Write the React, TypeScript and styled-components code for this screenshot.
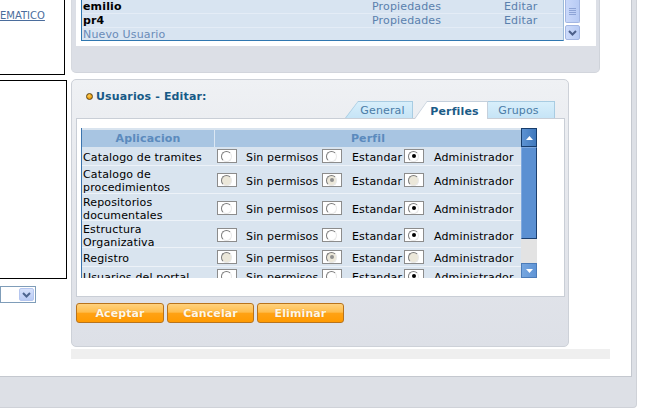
import React from 'react';
import styled, { createGlobalStyle } from 'styled-components';

const Global = createGlobalStyle`
  html, body { margin: 0; padding: 0; background: #fff; }
  body { font-family: "DejaVu Sans", Verdana, sans-serif; font-size: 11px; color: #000; letter-spacing: 0.15px; }
  * { box-sizing: border-box; }
`;

const Page = styled.div`
  width: 653px;
  height: 418px;
  overflow: hidden;
  background: #fff;
`;

const Frame = styled.div`
  width: 637px;
  height: 408px;
  background: #dde0e6;
  padding: 0 4px 30px 0;
  border-right: 1px solid #cfd2d8;
  border-bottom: 1px solid #cfd2d8;
  border-bottom-right-radius: 4px;
`;

const Inner = styled.div`
  display: flex;
  width: 100%;
  height: 100%;
  background: #fff;
  border-right: 1px solid #c4c8cf;
  border-bottom: 1px solid #c4c8cf;
`;

const LeftCol = styled.div`
  width: 71px;
  display: flex;
  flex-direction: column;
`;

const TopBox = styled.div`
  width: 65px;
  height: 75px;
  border-right: 1px solid #000;
  border-bottom: 1px solid #000;
  padding-top: 9px;
  line-height: 13px;
`;

const Link = styled.a`
  color: #4b6d9c;
  text-decoration: underline;
  font-size: 10px;
  letter-spacing: 0;
`;

const SideBox = styled.div`
  margin-top: 5px;
  width: 67px;
  height: 199px;
  border: 1px solid #000;
  border-left: none;
`;

const Select = styled.div`
  margin-top: 7px;
  width: 36px;
  height: 17px;
  border: 1px solid #7f9db9;
  display: flex;
  justify-content: flex-end;
  align-items: stretch;
  padding: 1px;
`;

const SelectBtn = styled.div`
  width: 15px;
  background: linear-gradient(#d6e1fb, #b9cbf5);
  border: 1px solid #b5c6ef;
  border-radius: 2px;
  display: flex;
  align-items: center;
  justify-content: center;
`;

const Main = styled.div`
  display: flex;
  flex-direction: column;
`;

const TopPanel = styled.div`
  width: 529px;
  height: 73px;
  background: #dcdfe6;
  border-right: 1px solid #cfd3da;
  border-bottom: 1px solid #d2d5dc;
  border-left: 1px solid #d6d9df;
  border-bottom-left-radius: 5px;
  border-bottom-right-radius: 5px;
  padding: 0 3px 0 4px;
`;

const ListHolder = styled.div`
  height: 46px;
  background: #fff;
  padding-left: 5px;
  display: flex;
  align-items: flex-start;
`;

const List = styled.div`
  width: 483px;
  height: 41px;
  background: #d8e4f1;
  border-left: 1px solid #2f77b0;
  border-bottom: 1px solid #2f77b0;
  border-right: 1px solid #9dbbd9;
  overflow: hidden;
`;

const ListRow = styled.div`
  display: grid;
  grid-template-columns: 289px 132px 1fr;
  height: 14px;
  line-height: 13px;
  padding-left: 1px;
  border-bottom: 1px solid #e4ecf6;
`;

const UserName = styled.span`
  font-weight: bold;
  color: #000;
`;

const NewUser = styled.span`
  color: #6a8bb8;
`;

const ActionLink = styled.span`
  color: #5a80ad;
`;

const ListScroll = styled.div`
  margin-left: 1px;
  width: 15px;
  height: 40px;
  display: flex;
  flex-direction: column;
  gap: 2px;
`;

const ListThumb = styled.div`
  height: 23px;
  background: linear-gradient(90deg, #c9d8fa, #b8cbf4);
  border: 1px solid #a3b6e2;
  border-top: none;
  border-radius: 0 0 2px 2px;
  display: flex;
  align-items: center;
  justify-content: center;
`;

const ListBtn = styled.div`
  height: 15px;
  background: linear-gradient(90deg, #cddbfb, #b8cbf4);
  border: 1px solid #a3b6e2;
  border-radius: 2px;
  display: flex;
  align-items: center;
  justify-content: center;
`;

const EditPanel = styled.div`
  margin-top: 6px;
  width: 498px;
  height: 268px;
  border: 1px solid #cdd1d8;
  border-radius: 5px;
  background: linear-gradient(#eff1f4, #e6e8ed 40%, #dde0e7);
  padding: 10px 0 0 4px;
`;

const Title = styled.div`
  height: 13px;
  line-height: 13px;
  padding-left: 10px;
  display: flex;
  align-items: center;
  gap: 3px;
  color: #175a87;
  font-weight: bold;
  font-size: 11px;
`;

const Bullet = styled.span`
  width: 7px;
  height: 7px;
  border-radius: 50%;
  background: radial-gradient(circle at 40% 35%, #ffcf55, #e8980c 70%);
  border: 1px solid #5e430e;
`;

const TabRow = styled.div`
  position: relative;
  z-index: 2;
  margin-top: -2px;
  margin-bottom: -1px;
  width: 489px;
  height: 18px;
  display: flex;
  justify-content: flex-end;
  align-items: flex-end;
  padding-right: 10px;
`;

const Tab = styled.div<{ $active?: boolean; $w: number; $z: number; $ml?: number }>`
  position: relative;
  width: ${p => p.$w}px;
  height: ${p => (p.$active ? 18 : 17)}px;
  margin-left: ${p => p.$ml ?? 0}px;
  margin-bottom: ${p => (p.$active ? 0 : 1)}px;
  z-index: ${p => p.$z};
  clip-path: polygon(0 100%, 13px 0, 100% 0, 100% 100%);
  background: ${p => (p.$active ? '#c5d0dc' : '#a8cce2')};
  padding: ${p => (p.$active ? 3 : 2)}px 6px 0 13px;
  display: flex;
  align-items: center;
  justify-content: center;
  color: ${p => (p.$active ? '#1b5b87' : '#4a7ca7')};
  font-weight: ${p => (p.$active ? 'bold' : 'normal')};
  &::before {
    content: '';
    position: absolute;
    top: 1px;
    left: 1px;
    right: 1px;
    bottom: 0;
    clip-path: polygon(0 100%, 12px 0, 100% 0, 100% 100%);
    background: ${p => (p.$active ? '#fff' : 'linear-gradient(#d8effb, #c6e4f6)')};
  }
  & > span {
    position: relative;
  }
`;

const ContentBox = styled.div`
  position: relative;
  z-index: 1;
  width: 489px;
  height: 179px;
  background: #fff;
  border: 1px solid #c9ced6;
  padding: 9px 0 0 4px;
`;

const ScrollArea = styled.div`
  display: flex;
  height: 150px;
`;

const TableWrap = styled.div`
  width: 440px;
  height: 150px;
  overflow: hidden;
  padding-top: 2px;
  border-left: 1px solid #3c74ad;
  background: #d9e4ef;
`;

const HeadRow = styled.div`
  display: grid;
  grid-template-columns: 132px 1fr;
  height: 17px;
  background: #a8c5e2;
  color: #5b8abd;
  font-weight: bold;
  line-height: 17px;
  text-align: center;
`;

const HeadCell = styled.div<{ $divider?: boolean }>`
  border-left: ${p => (p.$divider ? '1px solid #dbe7f3' : 'none')};
`;

const Row = styled.div<{ $h: number }>`
  display: grid;
  grid-template-columns: 132px 1fr;
  height: ${p => p.$h}px;
  background: #d9e4ef;
  border-bottom: 1px solid #edf2f8;
  align-items: start;
`;

const AppName = styled.div<{ $pt: number }>`
  padding: ${p => p.$pt}px 0 0 1px;
  line-height: 12.7px;
`;

const PerfilCell = styled.div`
  align-self: center;
  display: grid;
  grid-template-columns: 20px 85px 20px 62px 20px auto;
  align-items: center;
  padding-left: 3px;
  white-space: nowrap;
`;

const Label = styled.span<{ $pl: number }>`
  padding-left: ${p => p.$pl}px;
  padding-top: 3px;
`;

const RadioBox = styled.span`
  width: 20px;
  height: 14px;
  background: #fff;
  border: 1px solid #8c8c8c;
  display: flex;
  align-items: center;
  padding-left: 3px;
`;

const Circle = styled.span<{ $disabled?: boolean }>`
  width: 11px;
  height: 11px;
  border-radius: 50%;
  border: 1px solid;
  border-color: #7c7c7c #e8e8e8 #e8e8e8 #7c7c7c;
  background: ${p => (p.$disabled ? '#ebe7d9' : '#fff')};
  display: flex;
  align-items: center;
  justify-content: center;
`;

const Dot = styled.span<{ $disabled?: boolean }>`
  width: 4px;
  height: 4px;
  border-radius: 50%;
  background: ${p => (p.$disabled ? '#8f8f8f' : '#000')};
`;

const VScroll = styled.div`
  width: 16px;
  height: 150px;
  display: flex;
  flex-direction: column;
`;

const ScrollBtn = styled.div<{ $h: number; $light?: boolean }>`
  height: ${p => p.$h}px;
  background: ${p => (p.$light ? 'linear-gradient(90deg,#76a6df,#5f94d6)' : 'linear-gradient(90deg,#5c92d2,#4079bd)')};
  border: 1px solid ${p => (p.$light ? '#4b7bb8' : '#173d6c')};
  display: flex;
  align-items: center;
  justify-content: center;
`;

const ScrollThumb = styled.div`
  height: 92px;
  background: #5b90d2;
  border: 1px solid #1c3f6e;
  border-top-color: #7fa9df;
  border-left-color: #7fa9df;
`;

const ScrollTrack = styled.div`
  flex: 1;
  background: #e3e3e3;
`;

const ButtonRow = styled.div`
  margin-top: 6px;
  display: flex;
  gap: 3px;
`;

const OrangeButton = styled.button<{ $w: number }>`
  width: ${p => p.$w}px;
  height: 20px;
  border: 1px solid #b8731c;
  border-radius: 3px;
  background: linear-gradient(#ffd27e 0%, #ffbd4d 45%, #ffa214 52%, #ff9a00 100%);
  color: #fff7e6;
  font-family: "DejaVu Sans", Verdana, sans-serif;
  font-weight: bold;
  font-size: 11px;
  letter-spacing: 0.1px;
  padding: 0;
  text-shadow: 0 0 1px #e08a10;
`;

const FooterBar = styled.div`
  margin-top: 2px;
  width: 539px;
  height: 10px;
  background: #efefef;
`;

const Chevron = ({ color }: { color: string }) => (
  <svg width="9" height="6" viewBox="0 0 9 6">
    <path d="M1 1 L4.5 4.5 L8 1" fill="none" stroke={color} strokeWidth="2" />
  </svg>
);

const Triangle = ({ up }: { up?: boolean }) => (
  <svg width="7" height="4" viewBox="0 0 7 4">
    <path d={up ? 'M0 4 L3.5 0 L7 4 Z' : 'M0 0 L3.5 4 L7 0 Z'} fill="#fff" />
  </svg>
);

const Grip = () => (
  <svg width="7" height="7" viewBox="0 0 7 7">
    {[0, 2, 4, 6].map(y => (
      <line key={y} x1="0" x2="7" y1={y + 0.5} y2={y + 0.5} stroke="#8ea4d6" strokeWidth="1" />
    ))}
  </svg>
);

type Perm = { name: string[]; checked: number; disabled?: boolean };

const perms: Perm[] = [
  { name: ['Catalogo de tramites'], checked: 2 },
  { name: ['Catalogo de', 'procedimientos'], checked: 1, disabled: true },
  { name: ['Repositorios', 'documentales'], checked: 2 },
  { name: ['Estructura', 'Organizativa'], checked: 2 },
  { name: ['Registro'], checked: 1, disabled: true },
  { name: ['Usuarios del portal'], checked: 2 },
];

const rowHeights = [19, 28, 27, 27, 19, 19];

const Radio = ({ on, disabled }: { on: boolean; disabled?: boolean }) => (
  <RadioBox>
    <Circle $disabled={disabled}>{on && <Dot $disabled={disabled} />}</Circle>
  </RadioBox>
);

const users = ['emilio', 'pr4'];

export default function App() {
  return (
    <Page>
      <Global />
      <Frame>
        <Inner>
          <LeftCol>
            <TopBox>
              <Link>EMATICO</Link>
            </TopBox>
            <SideBox />
            <Select>
              <SelectBtn>
                <Chevron color="#4d6590" />
              </SelectBtn>
            </Select>
          </LeftCol>
          <Main>
            <TopPanel>
              <ListHolder>
                <List>
                  {users.map(u => (
                    <ListRow key={u}>
                      <UserName>{u}</UserName>
                      <ActionLink>Propiedades</ActionLink>
                      <ActionLink>Editar</ActionLink>
                    </ListRow>
                  ))}
                  <ListRow>
                    <NewUser>Nuevo Usuario</NewUser>
                  </ListRow>
                </List>
                <ListScroll>
                  <ListThumb>
                    <Grip />
                  </ListThumb>
                  <ListBtn>
                    <Chevron color="#4c5f8a" />
                  </ListBtn>
                </ListScroll>
              </ListHolder>
            </TopPanel>

            <EditPanel>
              <Title>
                <Bullet />
                <span>Usuarios - Editar:</span>
              </Title>
              <TabRow>
                <Tab $w={68} $z={1}>
                  <span>General</span>
                </Tab>
                <Tab $w={74} $z={3} $ml={1} $active>
                  <span>Perfiles</span>
                </Tab>
                <Tab $w={80} $z={2} $ml={-13}>
                  <span>Grupos</span>
                </Tab>
              </TabRow>
              <ContentBox>
                <ScrollArea>
                  <TableWrap>
                    <HeadRow>
                      <HeadCell>Aplicacion</HeadCell>
                      <HeadCell $divider>Perfil</HeadCell>
                    </HeadRow>
                    {perms.map((p, i) => (
                      <Row key={i} $h={rowHeights[i]}>
                        <AppName $pt={p.name.length === 1 ? 5 : 3}>
                          {p.name.map((l, j) => (
                            <div key={j}>{l}</div>
                          ))}
                        </AppName>
                        <PerfilCell>
                          <Radio on={p.checked === 0} disabled={p.disabled} />
                          <Label $pl={9}>Sin permisos</Label>
                          <Radio on={p.checked === 1} disabled={p.disabled} />
                          <Label $pl={10}>Estandar</Label>
                          <Radio on={p.checked === 2} disabled={p.disabled} />
                          <Label $pl={10}>Administrador</Label>
                        </PerfilCell>
                      </Row>
                    ))}
                  </TableWrap>
                  <VScroll>
                    <ScrollBtn $h={19}>
                      <Triangle up />
                    </ScrollBtn>
                    <ScrollThumb />
                    <ScrollTrack />
                    <ScrollBtn $h={15} $light>
                      <Triangle />
                    </ScrollBtn>
                  </VScroll>
                </ScrollArea>
              </ContentBox>
              <ButtonRow>
                <OrangeButton $w={88}>Aceptar</OrangeButton>
                <OrangeButton $w={87}>Cancelar</OrangeButton>
                <OrangeButton $w={87}>Eliminar</OrangeButton>
              </ButtonRow>
            </EditPanel>
            <FooterBar />
          </Main>
        </Inner>
      </Frame>
    </Page>
  );
}
